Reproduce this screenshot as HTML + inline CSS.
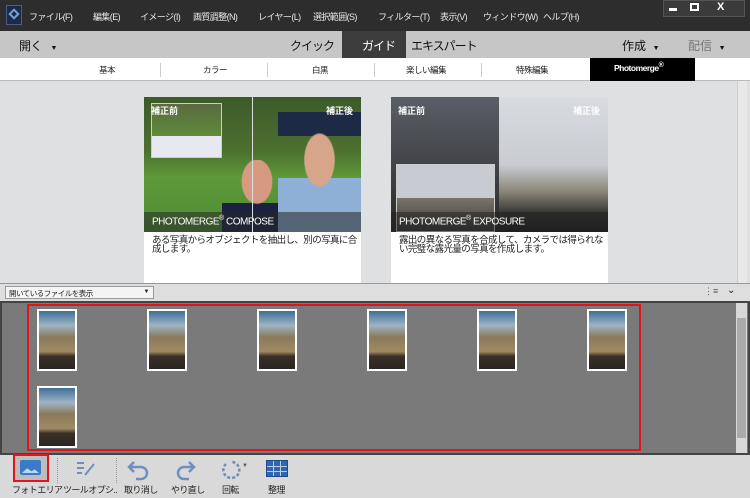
<!DOCTYPE html><html><head><meta charset="utf-8"><style>
*{margin:0;padding:0;box-sizing:border-box}
body{width:750px;height:498px;overflow:hidden;font-family:"Liberation Sans","Noto Sans CJK JP",sans-serif;background:#dfe0e2;position:relative}
.a{position:absolute}
.t{font-size:9px;color:#e8e8e8;top:10px;letter-spacing:-0.6px;white-space:nowrap}
.th{position:absolute;width:40px;height:62px;border:2px solid #fff;background:linear-gradient(#3f6f98 0%,#9fb3c4 25%,#8a7a5c 45%,#a08a62 70%,#3a3026 78%,#2a2622 100%)}
.bt{position:absolute;top:483px;font-size:9px;color:#222;letter-spacing:-0.6px;white-space:nowrap}
.s{position:absolute;top:64px;font-size:8.5px;color:#222;letter-spacing:-0.5px}
</style></head><body>
<div class="a" style="left:0;top:0;width:750px;height:31px;background:#2d2d2e"></div>
<div class="a" style="left:6px;top:5px;width:16px;height:20px;background:#1e2a44;border:1px solid #4a5c88"></div>
<div class="a" style="left:10px;top:10px;width:8px;height:8px;border:2px solid #6fa2e0;transform:rotate(45deg)"></div>
<div class="a t" style="left:29px">ファイル(F)</div>
<div class="a t" style="left:93px">編集(E)</div>
<div class="a t" style="left:140px">イメージ(I)</div>
<div class="a t" style="left:193px">画質調整(N)</div>
<div class="a t" style="left:258px">レイヤー(L)</div>
<div class="a t" style="left:313px">選択範囲(S)</div>
<div class="a t" style="left:378px">フィルター(T)</div>
<div class="a t" style="left:440px">表示(V)</div>
<div class="a t" style="left:483px">ウィンドウ(W)</div>
<div class="a t" style="left:543px">ヘルプ(H)</div>
<div class="a" style="left:663px;top:0;width:82px;height:17px;background:#3b3b3b;border:1px solid #555"></div>
<div class="a" style="left:669px;top:8px;width:8px;height:3px;background:#fff"></div>
<div class="a" style="left:690px;top:3px;width:9px;height:8px;border:2px solid #fff"></div>
<div class="a" style="left:717px;top:1px;font-size:11px;color:#fff;font-weight:bold">X</div>
<div class="a" style="left:0;top:31px;width:750px;height:27px;background:#c6c6c6"></div>
<div class="a" style="left:342px;top:31px;width:64px;height:27px;background:#3c3c3c"></div>
<div class="a" style="left:19px;top:37px;font-size:12px;color:#111;letter-spacing:-0.5px">開く &nbsp;&nbsp;<span style="font-size:7px">▼</span></div>
<div class="a" style="left:290px;top:37px;font-size:12px;color:#111;letter-spacing:-1px">クイック</div>
<div class="a" style="left:362px;top:37px;font-size:12px;color:#fff;letter-spacing:-1px">ガイド</div>
<div class="a" style="left:411px;top:37px;font-size:12px;color:#111;letter-spacing:-1px">エキスパート</div>
<div class="a" style="left:622px;top:37px;font-size:12px;color:#111">作成 &nbsp;<span style="font-size:7px">▼</span></div>
<div class="a" style="left:688px;top:37px;font-size:12px;color:#777">配信 &nbsp;<span style="font-size:7px;color:#111">▼</span></div>
<div class="a" style="left:0;top:58px;width:750px;height:23px;background:#fff;border-bottom:1px solid #bbb"></div>
<div class="a" style="left:590px;top:58px;width:105px;height:23px;background:#000"></div>
<div class="s" style="left:99px">基本</div>
<div class="a" style="left:160px;top:63px;width:1px;height:14px;background:#ccc"></div>
<div class="s" style="left:203px">カラー</div>
<div class="a" style="left:267px;top:63px;width:1px;height:14px;background:#ccc"></div>
<div class="s" style="left:312px">白黒</div>
<div class="a" style="left:374px;top:63px;width:1px;height:14px;background:#ccc"></div>
<div class="s" style="left:406px">楽しい編集</div>
<div class="a" style="left:481px;top:63px;width:1px;height:14px;background:#ccc"></div>
<div class="s" style="left:516px">特殊編集</div>
<div class="a" style="left:614px;top:62px;font-size:8.5px;color:#fff;font-weight:bold;letter-spacing:-0.5px">Photomerge<sup style="font-size:7px">®</sup></div>
<div class="a" style="left:737px;top:81px;width:10px;height:202px;background:#e8e8e8;border-left:1px solid #ccc"></div>
<div class="a" style="left:144px;top:97px;width:217px;height:186px;background:#fff"></div>
<div class="a" style="left:144px;top:97px;width:217px;height:135px;background:linear-gradient(#3d5a2a 0%,#4d7030 40%,#5e9a3a 60%,#4d8a33 100%)"></div>
<div class="a" style="left:222px;top:160px;width:70px;height:72px;background:radial-gradient(ellipse at 50% 30%,#d59a80 0 30%,transparent 32%),linear-gradient(transparent 60%,#1a2240 60%)"></div>
<div class="a" style="left:278px;top:112px;width:83px;height:120px;background:radial-gradient(ellipse at 50% 40%,#d6a58a 0 25%,transparent 27%),linear-gradient(#1d2a45 0 20%,transparent 20% 55%,#8fb0d6 55%)"></div>
<div class="a" style="left:151px;top:103px;width:71px;height:55px;border:1px solid #ccc;background:linear-gradient(#5b6a40,#5e8a3a 60%,#e8e8f0 60%)"></div>
<div class="a" style="left:144px;top:212px;width:217px;height:20px;background:rgba(40,40,40,.55)"></div>
<div class="a" style="left:152px;top:215px;font-size:10px;color:#fff;letter-spacing:-0.5px">PHOTOMERGE<sup style="font-size:7px">®</sup> COMPOSE</div>
<div class="a" style="left:151px;top:104px;font-size:9px;color:#fff;font-weight:bold">補正前</div>
<div class="a" style="left:326px;top:104px;font-size:9px;color:#fff;font-weight:bold">補正後</div>
<div class="a" style="left:252px;top:97px;width:1px;height:135px;background:#ddd"></div>
<div class="a" style="left:152px;top:236px;font-size:9.5px;line-height:9px;color:#222;width:210px;letter-spacing:-0.6px">ある写真からオブジェクトを抽出し、別の写真に合成します。</div>
<div class="a" style="left:391px;top:97px;width:217px;height:186px;background:#fff"></div>
<div class="a" style="left:391px;top:97px;width:108px;height:135px;background:linear-gradient(#5a5e66,#2a2a2a)"></div>
<div class="a" style="left:499px;top:97px;width:109px;height:135px;background:linear-gradient(#d8dbe0 0%,#c9ccd2 50%,#8a8678 70%,#3a3a38 85%,#202020 100%)"></div>
<div class="a" style="left:396px;top:164px;width:99px;height:68px;border:1px solid #ccc;background:linear-gradient(#c8ccd2 0 50%,#7a7468 50%,#3a3a3a)"></div>
<div class="a" style="left:391px;top:212px;width:217px;height:20px;background:rgba(30,30,30,.5)"></div>
<div class="a" style="left:399px;top:215px;font-size:10px;color:#fff;letter-spacing:-0.5px">PHOTOMERGE<sup style="font-size:7px">®</sup> EXPOSURE</div>
<div class="a" style="left:398px;top:104px;font-size:9px;color:#fff;font-weight:bold">補正前</div>
<div class="a" style="left:573px;top:104px;font-size:9px;color:#fff;font-weight:bold">補正後</div>
<div class="a" style="left:399px;top:236px;font-size:9.5px;line-height:9px;color:#222;width:210px;letter-spacing:-0.6px">露出の異なる写真を合成して、カメラでは得られない完璧な露光量の写真を作成します。</div>
<div class="a" style="left:0;top:283px;width:750px;height:18px;background:#dedede;border-top:1px solid #999"></div>
<div class="a" style="left:5px;top:286px;width:149px;height:13px;background:#f4f4f4;border:1px solid #999;font-size:7.5px;padding:1px 3px;color:#222;letter-spacing:-0.5px">開いているファイルを表示<span style="position:absolute;right:4px;font-size:6px;top:2px">▼</span></div>
<div class="a" style="left:704px;top:286px;font-size:9px;color:#555">⋮≡</div>
<div class="a" style="left:727px;top:285px;font-size:10px;color:#222">⌄</div>
<div class="a" style="left:0;top:301px;width:750px;height:154px;background:#7a7a7a;border:2px solid #444"></div>
<div class="a" style="left:736px;top:303px;width:11px;height:150px;background:#d8d8d8"></div>
<div class="a" style="left:737px;top:318px;width:9px;height:120px;background:#aaa"></div>
<div class="a" style="left:27px;top:304px;width:614px;height:147px;border:2px solid #e0141c"></div>
<div class="th" style="left:37px;top:309px"></div>
<div class="th" style="left:147px;top:309px"></div>
<div class="th" style="left:257px;top:309px"></div>
<div class="th" style="left:367px;top:309px"></div>
<div class="th" style="left:477px;top:309px"></div>
<div class="th" style="left:587px;top:309px"></div>
<div class="th" style="left:37px;top:386px"></div>
<div class="a" style="left:0;top:455px;width:750px;height:43px;background:#d9d9d9"></div>
<div class="a" style="left:13px;top:454px;width:36px;height:28px;background:#bdbdbd;border:2px solid #e0141c"></div>
<div class="a" style="left:20px;top:460px;width:21px;height:15px;background:#3b7ac8;border-radius:2px"></div>
<div class="a" style="left:22px;top:467px;width:17px;height:6px;background:#bcd6f0;clip-path:polygon(0 100%,30% 20%,55% 70%,75% 40%,100% 100%)"></div>
<div class="a" style="left:57px;top:458px;width:0;height:25px;border-left:1px dotted #999"></div>
<div class="a" style="left:116px;top:458px;width:0;height:25px;border-left:1px dotted #999"></div>
<svg class="a" style="left:72px;top:458px" width="28" height="22"><g stroke="#6f8fbf" stroke-width="2"><line x1="5" y1="5" x2="12" y2="5"/><line x1="5" y1="10" x2="12" y2="10"/><line x1="5" y1="15" x2="10" y2="15"/><line x1="13" y1="17" x2="22" y2="6"/></g></svg>
<svg class="a" style="left:125px;top:456px" width="30" height="26"><path d="M9 6 L4 11 L9 16 M4 11 H16 A6 6 0 0 1 16 23 H11" fill="none" stroke="#6f8fbf" stroke-width="2.5"/></svg>
<svg class="a" style="left:170px;top:456px" width="30" height="26"><path d="M19 6 L24 11 L19 16 M24 11 H14 A6 6 0 0 0 14 23 H19" fill="none" stroke="#6f8fbf" stroke-width="2.5"/></svg>
<svg class="a" style="left:218px;top:456px" width="30" height="26"><path d="M8 8 A8 8 0 1 0 14 6" fill="none" stroke="#6f8fbf" stroke-width="2.5" stroke-dasharray="3 2"/><text x="24" y="11" font-size="6" fill="#555">▼</text></svg>
<div class="a" style="left:266px;top:460px;width:22px;height:17px;background:#2f66b2;border:1px solid #1f4a88;background-image:linear-gradient(90deg,transparent 6px,#bcd 6px 7px,transparent 7px 13px,#bcd 13px 14px,transparent 14px),linear-gradient(transparent 5px,#bcd 5px 6px,transparent 6px 10px,#bcd 10px 11px,transparent 11px)"></div>
<div class="bt" style="left:12px">フォトエリア</div>
<div class="bt" style="left:63px">ツールオプシ..</div>
<div class="bt" style="left:124px">取り消し</div>
<div class="bt" style="left:171px">やり直し</div>
<div class="bt" style="left:222px">回転</div>
<div class="bt" style="left:268px">整理</div>
</body></html>
